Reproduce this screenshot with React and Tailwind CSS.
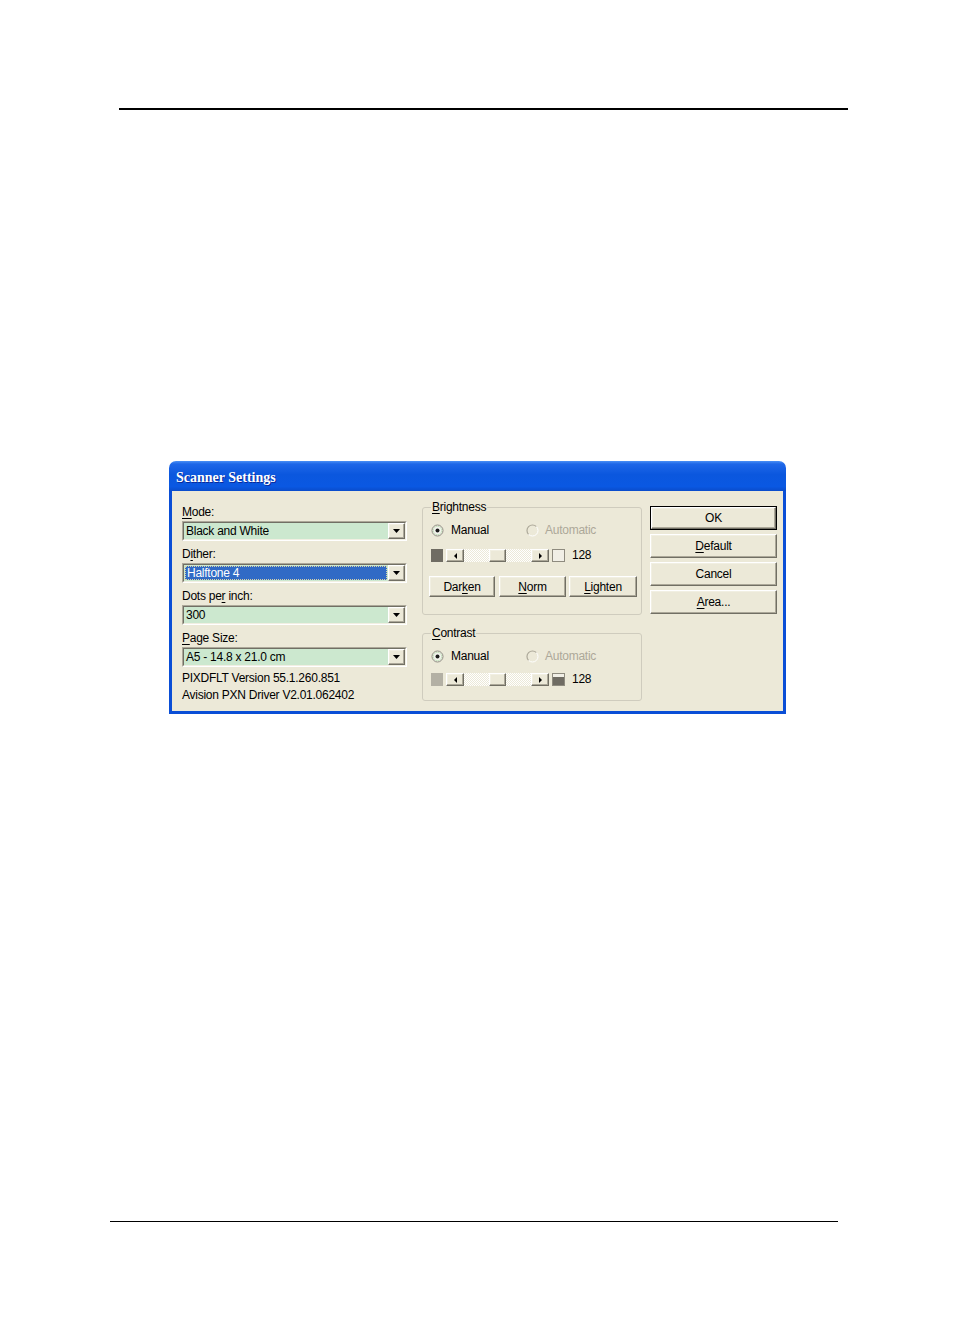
import React from "react";

const raised =
  "border border-t-white border-l-white border-r-[#716F64] border-b-[#716F64] shadow-[inset_-1px_-1px_0_#ACA899,inset_1px_1px_0_#F1EFE2] bg-[#ECE9D8]";

function DownArrow() {
  return (
    <svg width="7" height="4" viewBox="0 0 7 4">
      <polygon points="0,0 7,0 3.5,4" fill="#000" />
    </svg>
  );
}

function SideArrow({ dir }) {
  return (
    <svg width="3" height="6" viewBox="0 0 3 6">
      {dir === "left" ? (
        <polygon points="3,0 3,6 0,3" fill="#000" />
      ) : (
        <polygon points="0,0 0,6 3,3" fill="#000" />
      )}
    </svg>
  );
}

function Combo({ children, selected }) {
  return (
    <div className="w-[225px] h-[20px] border border-t-[#ACA899] border-l-[#ACA899] border-b-white border-r-white">
      <div className="h-full flex bg-[#CCE8CF] border border-t-[#716F64] border-l-[#716F64] border-b-[#F1EFE2] border-r-[#F1EFE2]">
        {selected ? (
          <div className="flex-1 p-[1px]">
            <div className="h-full bg-[#316AC5] text-white leading-[13px] pl-[1px] border border-dotted border-[#D8D2A8]">
              {children}
            </div>
          </div>
        ) : (
          <div className="flex-1 pl-[2px] leading-[17px]">{children}</div>
        )}
        <div className={"w-[17px] h-full flex items-center justify-center " + raised}>
          <DownArrow />
        </div>
      </div>
    </div>
  );
}

function Radio({ checked, disabled }) {
  if (disabled) {
    return (
      <svg width="13" height="13" viewBox="0 0 13 13">
        <circle cx="6.5" cy="6.5" r="5.5" fill="#ECE9D8" />
        <path d="M10.4 2.6 A5.5 5.5 0 0 0 2.6 10.4" fill="none" stroke="#ACA899" strokeWidth="1.2" />
        <path d="M2.6 10.4 A5.5 5.5 0 0 0 10.4 2.6" fill="none" stroke="#FFFFFF" strokeWidth="1" />
      </svg>
    );
  }
  return (
    <svg width="13" height="13" viewBox="0 0 13 13">
      <circle cx="6.5" cy="6.5" r="5.5" fill="#F4F3EE" stroke="#8E8B7F" strokeWidth="1" />
      <circle cx="6.5" cy="6.5" r="4.2" fill="none" stroke="#C9E3C0" strokeWidth="1" />
      {checked && <circle cx="6.5" cy="6.5" r="2" fill="#1C1C1C" />}
    </svg>
  );
}

function Slider({ left, right }) {
  return (
    <div className="flex items-center h-[13px]">
      {left}
      <div className="ml-[3px] w-[103px] h-[13px] flex">
        <div className={"w-[18px] h-full flex items-center justify-center " + raised}>
          <SideArrow dir="left" />
        </div>
        <div className="flex-1 h-full flex justify-center bg-[repeating-conic-gradient(#ECE9D8_0_25%,#FFFFFF_0_50%)] bg-[length:2px_2px]">
          <div className={"w-[17px] h-full " + raised} />
        </div>
        <div className={"w-[18px] h-full flex items-center justify-center " + raised}>
          <SideArrow dir="right" />
        </div>
      </div>
      {right}
      <span className="ml-[7px] leading-[13px]">128</span>
    </div>
  );
}

function Btn({ w, children, isDefault }) {
  if (isDefault) {
    return (
      <div className="border border-black" style={{ width: w }}>
        <div className={"h-[22px] flex items-center justify-center " + raised}>{children}</div>
      </div>
    );
  }
  return (
    <div className={"h-[24px] flex items-center justify-center " + raised} style={{ width: w }}>
      {children}
    </div>
  );
}

function SmallBtn({ className, children }) {
  return (
    <div className={"h-[21px] flex items-center justify-center " + raised + " " + className}>
      {children}
    </div>
  );
}

function Label({ children }) {
  return (
    <div className="h-[22px] flex items-end pb-[2px] leading-[14px]">
      <span>{children}</span>
    </div>
  );
}

export default function App() {
  return (
    <div
      className="w-[954px] h-[1336px] bg-white pt-[108px] overflow-hidden text-[12px] tracking-[-0.25px] text-black"
      style={{ fontFamily: '"Liberation Sans", Arial, sans-serif' }}
    >
      <div className="ml-[119px] w-[729px] h-[2px] bg-black" />

      <div className="ml-[169px] mt-[351px] w-[617px] h-[253px] flex flex-col">
        <div className="h-[30px] rounded-t-[7px] flex items-center pl-[7px] pt-[3px] bg-[linear-gradient(to_bottom,#4A90F5_0%,#1F67E8_10%,#0B57DE_45%,#0A58E2_85%,#0A4CCB_100%)]">
          <span
            className="text-white font-bold text-[14px] tracking-normal [text-shadow:1px_1px_0_#0A2A9A]"
            style={{ fontFamily: '"Liberation Serif", "Times New Roman", serif' }}
          >
            Scanner Settings
          </span>
        </div>
        <div className="flex-1 border-x-[3px] border-b-[3px] border-[#0A4ED6] bg-[#ECE9D8] flex">
          {/* left column */}
          <div className="pl-[10px] pt-[8px] w-[235px]">
            <Label><u className="underline-offset-2">M</u>ode:</Label>
            <Combo>Black and White</Combo>
            <Label>D<u className="underline-offset-2">i</u>ther:</Label>
            <Combo selected>Halftone 4</Combo>
            <Label>Dots pe<u className="underline-offset-2">r</u> inch:</Label>
            <Combo>300</Combo>
            <Label><u className="underline-offset-2">P</u>age Size:</Label>
            <Combo>A5 - 14.8 x 21.0 cm</Combo>
            <div className="mt-[3px] leading-[17px]">PIXDFLT Version 55.1.260.851</div>
            <div className="leading-[17px]">Avision PXN Driver V2.01.062402</div>
          </div>

          {/* middle column */}
          <div className="ml-[15px] pt-[9px] w-[220px]">
            <fieldset className="border border-[#CFCCBE] rounded-[3px] pl-[8px] pr-[4px] pb-[17px]">
              <legend className="px-[1px] leading-[14px]">
                <u className="underline-offset-2">B</u>rightness
              </legend>
              <div className="mt-[8px] h-[16px] flex items-center">
                <div className="w-[95px] flex items-center">
                  <Radio checked />
                  <span className="ml-[7px]">Manual</span>
                </div>
                <div className="flex items-center">
                  <Radio disabled />
                  <span className="ml-[6px] text-[#ACA899]">Automatic</span>
                </div>
              </div>
              <div className="mt-[11px]">
                <Slider
                  left={<div className="w-[12px] h-[13px] bg-[#6F6C63]" />}
                  right={<div className="ml-[3px] w-[13px] h-[13px] border border-[#8E8B7F] bg-[#F1EFE6]" />}
                />
              </div>
              <div className="mt-[14px] -ml-[2px] flex">
                <SmallBtn className="w-[66px]">Dar<u className="underline-offset-2">k</u>en</SmallBtn>
                <SmallBtn className="ml-[4px] w-[67px]"><u className="underline-offset-2">N</u>orm</SmallBtn>
                <SmallBtn className="ml-[3px] w-[68px]"><u className="underline-offset-2">L</u>ighten</SmallBtn>
              </div>
            </fieldset>

            <fieldset className="mt-[11px] border border-[#CFCCBE] rounded-[3px] pl-[8px] pr-[4px] pb-[14px]">
              <legend className="px-[1px] leading-[14px]">
                <u className="underline-offset-2">C</u>ontrast
              </legend>
              <div className="mt-[8px] h-[16px] flex items-center">
                <div className="w-[95px] flex items-center">
                  <Radio checked />
                  <span className="ml-[7px]">Manual</span>
                </div>
                <div className="flex items-center">
                  <Radio disabled />
                  <span className="ml-[6px] text-[#ACA899]">Automatic</span>
                </div>
              </div>
              <div className="mt-[9px]">
                <Slider
                  left={<div className="w-[12px] h-[13px] bg-[#B3B0A4]" />}
                  right={
                    <div className="ml-[3px] w-[13px] h-[13px] border border-[#8E8B7F] bg-[#F1EFE6] flex flex-col justify-end">
                      <div className="h-[8px] bg-[#6F6C63]" />
                    </div>
                  }
                />
              </div>
            </fieldset>
          </div>

          {/* right column */}
          <div className="ml-[8px] pt-[15px] flex flex-col gap-[4px]">
            <Btn w={127} isDefault>OK</Btn>
            <Btn w={127}><span><u className="underline-offset-2">D</u>efault</span></Btn>
            <Btn w={127}>Cancel</Btn>
            <Btn w={127}><span><u className="underline-offset-2">A</u>rea...</span></Btn>
          </div>
        </div>
      </div>

      <div className="ml-[110px] mt-[507px] w-[728px] h-px bg-black" />
    </div>
  );
}
